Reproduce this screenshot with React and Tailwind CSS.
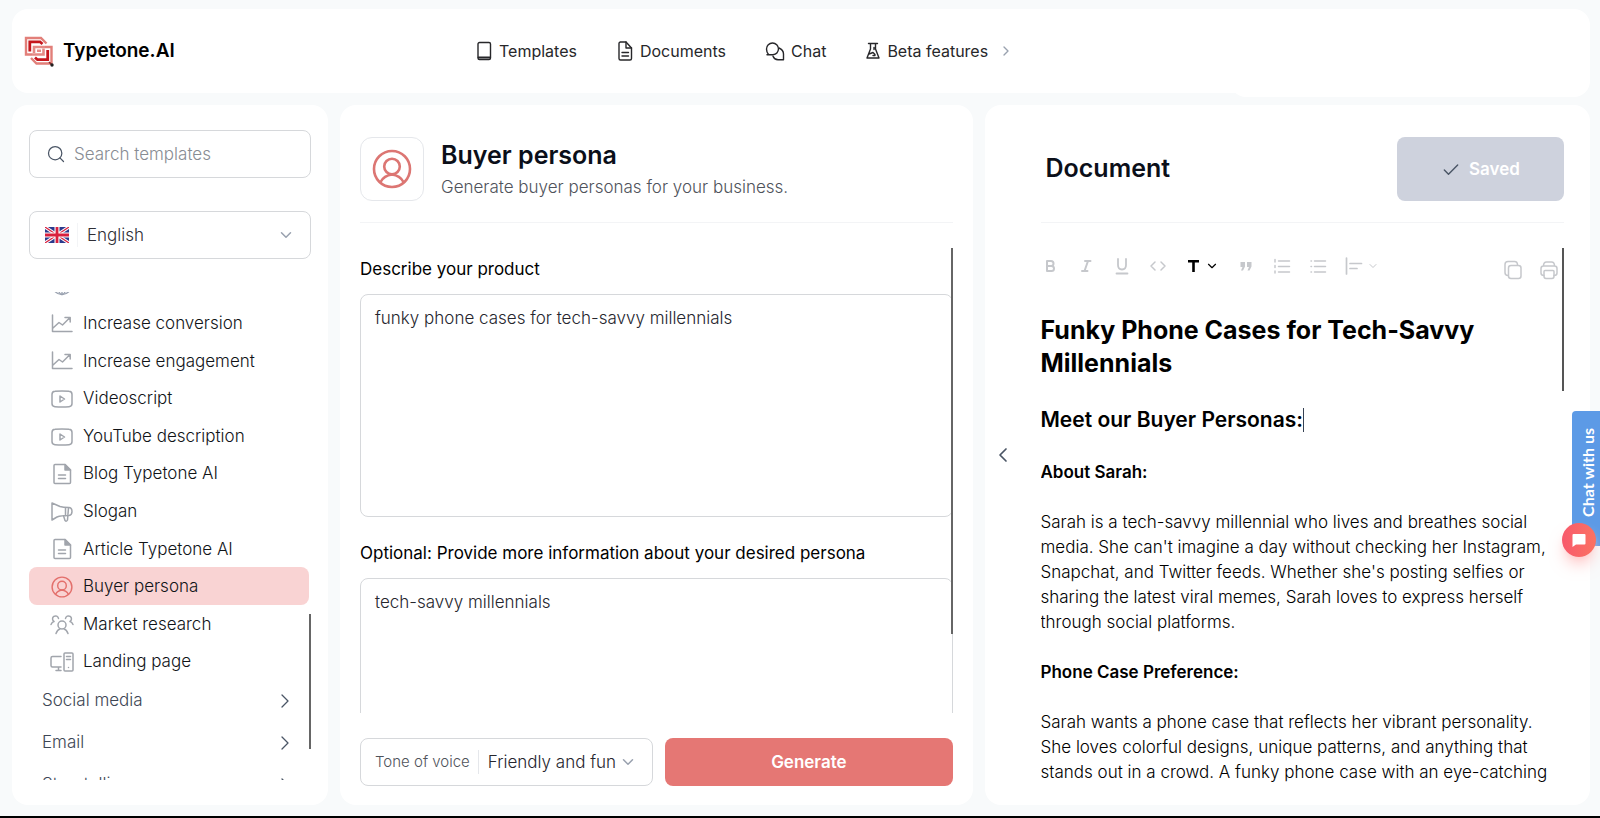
import { useState } from "react";
import { LuChevronRight, LuChevronLeft, LuChevronDown, LuSearch, LuCheck } from "react-icons/lu";

const stroke = {
  fill: "none",
  stroke: "currentColor",
  strokeLinecap: "round",
  strokeLinejoin: "round",
};

// ---------- icons ----------

const Logo = () => (
  <svg viewBox="0 0 30 31" className="h-[31px] w-[30px]" fill="none">
    <path d="M22.500 7.500L17 2H2V18.500H8" stroke="#e27f79" strokeWidth="2.400" />
    <path d="M7 22L12.500 27.500H27.500V11H21" stroke="#e27f79" strokeWidth="2.400" />
    <path d="M5.800 15.500V5.800H16L18.500 8" stroke="#c5161d" strokeWidth="2.800" />
    <path d="M23.700 14V23.700H13.500L11 21.500" stroke="#c5161d" strokeWidth="2.800" />
    <path d="M8 18.500H19.500V12.500" stroke="#e58a85" strokeWidth="2.600" />
    <path d="M21 11H10V17" stroke="#e58a85" strokeWidth="2.600" />
    <rect x="13" y="13.500" width="4" height="2.500" fill="#e58a85" />
    <path d="M25 26L27.500 28.500" stroke="#8a2a2a" strokeWidth="1.600" />
    <circle cx="28" cy="29" r="1.700" fill="#222" />
  </svg>
);

const TemplatesIcon = () => (
  <svg viewBox="0 0 18 20" className="h-5 w-[18px]" {...stroke} strokeWidth="1.4">
    <rect x="3" y="1.500" width="12.500" height="17" rx="1.5" />
    <path d="M3.500 16.500H15" strokeWidth="1.8" />
  </svg>
);

const DocumentsIcon = () => (
  <svg viewBox="0 0 18 20" className="h-5 w-[18px]" {...stroke} strokeWidth="1.4">
    <path d="M4 1H10L15.500 7V17.500Q15.500 19 14 19H4.500Q3 19 3 17.500V2.500Q3 1 4.500 1Z" />
    <path d="M10 1V7H15.500M6 11.500H12.500M6 15H12.500" />
  </svg>
);

const ChatIcon = () => (
  <svg viewBox="0 0 20 20" className="size-5" {...stroke} strokeWidth="1.4">
    <path d="M3.500 13.500Q1.500 11 1.500 8A6 6 0 0 1 13.500 8Q13 13 8 13.800H2L3.500 13.500" />
    <path d="M8 15.200A5.800 5.800 0 0 0 13 18.800H18.500V13Q18.500 9 14 7" />
  </svg>
);

const FlaskIcon = () => (
  <svg viewBox="0 0 16 18" className="h-[18px] w-4" {...stroke} strokeWidth="1.4">
    <path d="M3.500 1.500H12.500M5.500 1.500V7L2 16H14L10.500 7V1.500M4 12L8 10.500L10 12.500M9 5.500V7.500M8 13.500H10" />
  </svg>
);

const GlobeIcon = () => (
  <svg viewBox="0 0 22 22" className="size-[22px]" {...stroke} strokeWidth="1.3">
    <circle cx="11" cy="11" r="9.500" />
    <path d="M1.500 11H20.500M11 1.500V20.500" />
    <ellipse cx="11" cy="11" rx="4.500" ry="9.500" />
  </svg>
);

const TrendIcon = () => (
  <svg viewBox="0 0 22 20" className="h-5 w-[22px]" {...stroke} strokeWidth="1.5">
    <path d="M1.500 1V17.500H21M2 14L8 8.500L11.500 11L19 3.500M14 3.500H19.200V8" />
  </svg>
);

const VideoIcon = () => (
  <svg viewBox="0 0 22 18" className="h-[18px] w-[22px]" {...stroke} strokeWidth="1.5">
    <path d="M4 1.300Q11 .6 18 1.300Q21 1.500 21 4.500V13.500Q21 16.500 18 16.700Q11 17.400 4 16.700Q1 16.500 1 13.500V4.500Q1 1.500 4 1.300Z" />
    <path d="M9 6L13.500 9L9 12Z" />
  </svg>
);

const PageIcon = () => (
  <svg viewBox="0 0 20 22" className="h-[22px] w-5" {...stroke} strokeWidth="1.5">
    <path d="M3 1.500H13L18.500 7V19.500Q18.500 20.500 17.500 20.500H3Q2 20.500 2 19.500V2.500Q2 1.500 3 1.500Z" />
    <path d="M13 1.500V7H18.500Z" fill="currentColor" />
    <path d="M6.500 12H13.500M6.500 15.500H13.500" />
  </svg>
);

const MegaphoneIcon = () => (
  <svg viewBox="0 0 22 20" className="h-5 w-[22px]" {...stroke} strokeWidth="1.5">
    <path d="M1 1L9 4.500Q12 5.500 18 5.500Q21 5.800 21 9.500Q21 13 18 13.500Q10 13.500 6 15L1 18Z" />
    <path d="M14.500 5.700V13.500M12.500 13.800L14 18.500Q15.500 20 16.500 18L17.500 5.700" />
  </svg>
);

const PersonIcon = ({ className }) => (
  <svg viewBox="0 0 40 40" className={className} {...stroke} strokeWidth="2.600">
    <circle cx="20" cy="20" r="18" />
    <circle cx="20" cy="17.500" r="7.800" />
    <path d="M8.500 33Q12 26.500 20 25.500Q28 26.500 31.500 33" />
  </svg>
);

const GroupIcon = () => (
  <svg viewBox="0 0 24 20" className="h-5 w-6" {...stroke} strokeWidth="1.5">
    <circle cx="12" cy="10" r="4" />
    <path d="M6 18.500Q7.500 14.500 10 14M18 18.500Q16.500 14.500 14 14" />
    <path d="M8.500 3.500A3 3 0 1 0 4 6.500Q2 7 1 9.500M15.500 3.500A3 3 0 1 1 20 6.500Q22 7 23 9.500" />
  </svg>
);

const DevicesIcon = () => (
  <svg viewBox="0 0 24 20" className="h-5 w-6" {...stroke} strokeWidth="1.5">
    <path d="M11 4.500H2.500Q1 4.500 1 6V13.500Q1 15 2.500 15H11M8.500 15V18.500M6 18.500H11" />
    <rect x="14" y="1" width="9" height="18" rx="1" />
    <path d="M16.500 4.500H20.500M16.500 7.500H20.500M18.500 15.500V15.600" />
  </svg>
);

const UkFlag = () => (
  <svg viewBox="0 0 24 16" className="h-4 w-6">
    <rect width="24" height="16" fill="#2b3a8c" />
    <path d="M0 0L24 16M24 0L0 16" stroke="#fff" strokeWidth="3.200" />
    <path d="M0 0L24 16M24 0L0 16" stroke="#d8203e" strokeWidth="1.200" />
    <path d="M12 0V16M0 8H24" stroke="#fff" strokeWidth="5" />
    <path d="M12 0V16M0 8H24" stroke="#d8203e" strokeWidth="2.800" />
  </svg>
);

// ---------- data ----------

const navItems = [
  { label: "Templates", icon: <TemplatesIcon /> },
  { label: "Documents", icon: <DocumentsIcon /> },
  { label: "Chat", icon: <ChatIcon /> },
  { label: "Beta features", icon: <FlaskIcon />, more: true },
];

const templates = [
  { label: "Increase conversion", icon: <TrendIcon /> },
  { label: "Increase engagement", icon: <TrendIcon /> },
  { label: "Videoscript", icon: <VideoIcon /> },
  { label: "YouTube description", icon: <VideoIcon /> },
  { label: "Blog Typetone AI", icon: <PageIcon /> },
  { label: "Slogan", icon: <MegaphoneIcon /> },
  { label: "Article Typetone AI", icon: <PageIcon /> },
  { label: "Buyer persona", icon: <PersonIcon className="size-[22px]" /> },
  { label: "Market research", icon: <GroupIcon /> },
  { label: "Landing page", icon: <DevicesIcon /> },
];

const categories = ["Social media", "Email", "Storytelling"];

// ---------- sections ----------

function Header() {
  return (
    <header className="flex h-[84px] shrink-0 items-center rounded-2xl bg-white pl-3">
      <a href="#" className="flex w-[451px] items-center gap-[9px] text-[19px] font-semibold text-black">
        <Logo />
        Typetone.AI
      </a>
      <nav className="flex items-center gap-[39px] text-[16px] text-[#27272a]">
        {navItems.map((item) => (
          <a key={item.label} href="#" className="flex items-center gap-[6px]">
            {item.icon}
            {item.label}
            {item.more && <LuChevronRight size={16} className="ml-1 text-gray-400" />}
          </a>
        ))}
      </nav>
      <div className="-mb-2 ml-auto h-[84px] w-[360px] rounded-2xl bg-white" />
    </header>
  );
}

function Sidebar() {
  const [selected, setSelected] = useState("Buyer persona");

  return (
    <aside className="relative flex min-h-0 flex-col rounded-2xl bg-white px-[17px] pt-[25px] pb-[25px]">
      <label className="flex h-12 shrink-0 items-center gap-2 rounded-lg border border-[#d6d8db] px-4">
        <LuSearch size={20} strokeWidth={1.5} className="text-gray-600" />
        <input
          type="text"
          aria-label="Search templates"
          placeholder="Search templates"
          className="min-w-0 flex-1 pt-[2px] text-[17px] font-light outline-none placeholder:text-[#888c93]"
        />
      </label>

      <label className="mt-[33px] flex h-12 shrink-0 items-center rounded-lg border border-[#d6d8db] px-[15px]">
        <UkFlag />
        <span className="ml-2 h-6 w-px bg-gray-100" />
        <select aria-label="Language" className="min-w-0 flex-1 appearance-none pt-[2px] pl-[9px] text-[17px] font-light text-[#2f2f36] outline-none">
          <option>English</option>
        </select>
        <LuChevronDown size={18} className="text-gray-400" />
      </label>

      <div className="mt-[33px] min-h-0 flex-1 overflow-hidden">
        <button aria-label="Website" className="-mt-[26px] flex h-[38px] w-full items-center pl-[22px] text-gray-400">
          <GlobeIcon />
        </button>
        <ul className="grid h-[376px] auto-rows-fr pr-[2px]">
          {templates.map((t) => (
            <li key={t.label}>
              <button
                onClick={() => setSelected(t.label)}
                className={
                  t.label === selected
                    ? "flex h-full w-full items-center gap-[9px] rounded-lg bg-[#f9d3d3] pt-[2px] pl-[21px] text-[#e3706c]"
                    : "flex h-full w-full items-center gap-[9px] pt-[2px] pl-[21px] text-[#a1a5ac]"
                }
              >
                <span className="flex w-6 justify-center">{t.icon}</span>
                <span className="text-[17px] font-light text-[#111418]">{t.label}</span>
              </button>
            </li>
          ))}
        </ul>
        {categories.map((c) => (
          <button key={c} className="flex h-[42px] w-full items-center justify-between pr-[14px] pl-[13px] text-[17px] font-light text-[#3d4654]">
            {c}
            <LuChevronRight size={24} strokeWidth={1.3} className="text-gray-600" />
          </button>
        ))}
      </div>
      <div className="absolute right-[17px] bottom-[56px] h-[135px] w-[2px] bg-[#666]" />
    </aside>
  );
}

function PersonaForm() {
  return (
    <main className="relative flex min-h-0 flex-col rounded-2xl bg-white px-5 pt-8 pb-[19px]">
      <div className="flex items-center gap-[17px] border-b border-gray-100 pb-[21px]">
        <div className="flex size-16 items-center justify-center rounded-xl border border-gray-200 text-[#dc7673]">
          <PersonIcon className="size-10" />
        </div>
        <div className="pt-1">
          <h1 className="text-[25px] leading-7 font-semibold text-[#0b0f19]">Buyer persona</h1>
          <p className="pt-1 text-[17px] leading-7 font-light text-[#4f535b]">Generate buyer personas for your business.</p>
        </div>
      </div>

      <div className="mt-[25px] min-h-0 flex-1 overflow-hidden pt-[9px]">
        <label htmlFor="product" className="block text-[17px] leading-6 text-black">
          Describe your product
        </label>
        <textarea
          id="product"
          defaultValue="funky phone cases for tech-savvy millennials"
          className="mt-[13px] block h-[223px] w-full resize-none rounded-lg border border-[#d6d8db] px-[14px] py-[11px] text-[17px] leading-6 font-light text-[#26262e] outline-none"
        />
        <label htmlFor="persona" className="mt-6 block text-[17px] leading-6 text-black">
          Optional: Provide more information about your desired persona
        </label>
        <textarea
          id="persona"
          defaultValue="tech-savvy millennials"
          className="mt-[13px] block h-[223px] w-full resize-none rounded-lg border border-[#d6d8db] px-[14px] py-[11px] text-[17px] leading-6 font-light text-[#26262e] outline-none"
        />
      </div>

      <div className="mt-[25px] grid h-12 shrink-0 grid-cols-[minmax(0,293fr)_minmax(0,287fr)] gap-3">
        <label className="flex items-center rounded-lg border border-[#d6d8db] px-[14px] text-[15px] font-light whitespace-nowrap text-[#4f535b]">
          Tone of voice
          <span className="ml-2 h-6 w-px shrink-0 bg-gray-200" />
          <select className="appearance-none pt-[2px] pl-[9px] text-[17px] font-light text-[#26262e] outline-none">
            <option>Friendly and fun</option>
          </select>
          <LuChevronDown size={18} className="ml-[2px] shrink-0 text-gray-400" />
        </label>
        <button className="rounded-lg bg-[#e57774] pt-[2px] text-[17px] font-semibold text-white">Generate</button>
      </div>
      <div className="absolute top-[143px] right-5 h-[386px] w-[2px] bg-[#666]" />
    </main>
  );
}

const tool = "flex h-6 items-center justify-center";

function Toolbar() {
  return (
    <div className="flex items-center justify-between text-[#c6c8cc]">
      <div className="flex items-center gap-[18px]">
        <button aria-label="Bold" className={tool}>
          <svg viewBox="0 0 18 18" className="size-[18px]" {...stroke} strokeWidth="2">
            <path d="M6 4H10Q12.500 4 12.500 6.500T10 9H6ZM6 9H10.500Q13 9 13 11.500T10.500 14H6Z" />
          </svg>
        </button>
        <button aria-label="Italic" className={tool}>
          <svg viewBox="0 0 18 18" className="size-[18px]" {...stroke} strokeWidth="2">
            <path d="M8 4H13.500M5 14H10.500M11 4L7.500 14" />
          </svg>
        </button>
        <button aria-label="Underline" className={tool}>
          <svg viewBox="0 0 18 18" className="size-[18px]" {...stroke} strokeWidth="1.800">
            <path d="M5 2V8Q5 12.500 9 12.500T13 8V2M3.500 16.500H14.500" />
          </svg>
        </button>
        <button aria-label="Code" className={tool}>
          <svg viewBox="0 0 18 18" className="size-[18px]" {...stroke} strokeWidth="1.500">
            <path d="M6 5L2 9L6 13M12 5L16 9L12 13" />
          </svg>
        </button>
        <button aria-label="Text style" className="flex h-6 items-center gap-[2px] text-black">
          <svg viewBox="0 0 18 18" className="size-[18px]" fill="none" stroke="currentColor" strokeWidth="2.600">
            <path d="M3 4.300H14M8.500 4V15" />
          </svg>
          <LuChevronDown size={14} />
        </button>
        <button aria-label="Quote" className={tool}>
          <svg viewBox="0 0 18 18" className="size-[18px]" fill="currentColor">
            <path d="M3.500 5H8V9.500L6 13.500H4L5.500 10H3.500ZM10 5H14.500V9.500L12.500 13.500H10.500L12 10H10Z" />
          </svg>
        </button>
        <button aria-label="Numbered list" className={tool}>
          <svg viewBox="0 0 18 18" className="size-[18px]" {...stroke} strokeWidth="1.500">
            <path d="M5.500 4H16.500M5.500 9.500H16.500M5.500 15H16.500M2 2.500V5M2 8.500V10.500M2 14V16" />
          </svg>
        </button>
        <button aria-label="Bullet list" className={tool}>
          <svg viewBox="0 0 18 18" className="size-[18px]" {...stroke} strokeWidth="1.500">
            <path d="M5.500 4H16.500M5.500 9.500H16.500M5.500 15H16.500M2 4H2.500M2 9.500H2.500M2 15H2.500" />
          </svg>
        </button>
        <button aria-label="Align" className="flex h-6 items-center gap-1">
          <svg viewBox="0 0 18 18" className="size-[18px]" {...stroke} strokeWidth="1.700">
            <path d="M1.500 1V17M5 6.500H16.500M5 11.500H12" />
          </svg>
          <LuChevronDown size={12} />
        </button>
      </div>
      <div className="flex gap-4 pt-2 pr-[5px]">
        <button aria-label="Copy" className={tool}>
          <svg viewBox="0 0 20 20" className="size-5" {...stroke} strokeWidth="1.500">
            <rect x="5.500" y="5.500" width="12.500" height="13" rx="2.500" />
            <path d="M5 15.500Q2 15.500 2 12.500V4.500Q2 1.500 5 1.500H11.500Q14.500 1.500 14.500 5" />
          </svg>
        </button>
        <button aria-label="Print" className={tool}>
          <svg viewBox="0 0 20 20" className="size-5" {...stroke} strokeWidth="1.500">
            <path d="M4.500 6Q4.500 2 7.500 2H12.500Q15.500 2 15.500 6M5 15.500Q2 15.500 2 13V8.500Q2 6 4.500 6H15.500Q18 6 18 8.500V13Q18 15.500 15 15.500" />
            <path d="M6 10.500H14Q15 10.500 15 11.500V16Q15 18.500 13 18.500H7Q5 18.500 5 16V11.500Q5 10.500 6 10.500Z" />
          </svg>
        </button>
      </div>
    </div>
  );
}

function DocumentPanel() {
  return (
    <section className="relative flex min-h-0 rounded-2xl bg-white pr-[26px]">
      <button aria-label="Collapse" className="flex w-14 shrink-0 items-center pl-[6px] text-gray-600">
        <LuChevronLeft size={24} strokeWidth={1.7} />
      </button>
      <div className="flex min-w-0 flex-1 flex-col pt-8 pb-5">
        <div className="flex shrink-0 items-center justify-between border-b border-gray-100 pb-[21px] pl-[5px]">
          <h2 className="text-[25px] font-semibold text-[#0b0f19]">Document</h2>
          <button className="flex h-16 w-[167px] items-center justify-center gap-2 rounded-lg bg-[#ced2dd] pt-[2px] text-[17px] font-semibold text-white">
            <LuCheck size={20} strokeWidth={1.7} className="text-gray-600" />
            Saved
          </button>
        </div>
        <div className="mt-[27px] shrink-0">
          <Toolbar />
        </div>
        <article className="mt-8 min-h-0 flex-1 overflow-hidden text-[17px] leading-[25px] font-light text-black">
          <h1 className="text-[25px] leading-[33px] font-bold">Funky Phone Cases for Tech-Savvy Millennials</h1>
          <h2 className="mt-[26px] flex items-center text-[21px] leading-[27px] font-semibold">
            Meet our Buyer Personas:
            <span className="h-6 w-px bg-gray-700" />
          </h2>
          <h3 className="mt-[27px] font-semibold">About Sarah:</h3>
          <p className="mt-[25px]">
            Sarah is a tech-savvy millennial who lives and breathes social media. She can't imagine a day without
            checking her Instagram, Snapchat, and Twitter feeds. Whether she's posting selfies or sharing the latest
            viral memes, Sarah loves to express herself through social platforms.
          </p>
          <h3 className="mt-[25px] font-semibold">Phone Case Preference:</h3>
          <p className="mt-[25px]">
            Sarah wants a phone case that reflects her vibrant personality. She loves colorful designs, unique
            patterns, and anything that stands out in a crowd. A funky phone case with an eye-catching
          </p>
        </article>
      </div>
      <div className="absolute top-[143px] right-[26px] h-[143px] w-[2px] bg-[#555]" />
    </section>
  );
}

function ChatWidget() {
  return (
    <div className="absolute top-[411px] right-0 flex flex-col items-end">
      <button className="flex h-[135px] w-7 items-center justify-center rounded-l bg-[#5c9ae6] pb-3 pl-1 font-['Lato'] text-[16px] font-bold text-white">
        <span className="rotate-180 [writing-mode:vertical-rl]">Chat with us</span>
      </button>
      <button
        aria-label="Open chat"
        className="-mt-[23px] mr-1 flex size-[34px] items-center justify-center rounded-full bg-linear-to-r from-[#f8596c] to-[#fb7262] shadow-lg shadow-red-200"
      >
        <svg viewBox="0 0 16 16" className="size-4" fill="#fff">
          <path d="M2.500 2H13.500Q14.500 2 14.500 3V11.500Q14.500 12.500 13.500 12.500H5L1.500 15V3Q1.500 2 2.500 2Z" />
        </svg>
      </button>
    </div>
  );
}

export default function App() {
  return (
    <div className="relative flex h-screen min-h-[600px] flex-col overflow-hidden border-b-2 border-black bg-[#f8fafb] pt-[9px] pr-[10px] pb-[11px] pl-3 font-['Inter',sans-serif]">
      <Header />
      <div className="mt-3 grid min-h-0 flex-1 grid-cols-[316px_minmax(0,632fr)_minmax(0,605fr)] grid-rows-[minmax(0,1fr)] gap-3">
        <Sidebar />
        <PersonaForm />
        <DocumentPanel />
      </div>
      <ChatWidget />
    </div>
  );
}
